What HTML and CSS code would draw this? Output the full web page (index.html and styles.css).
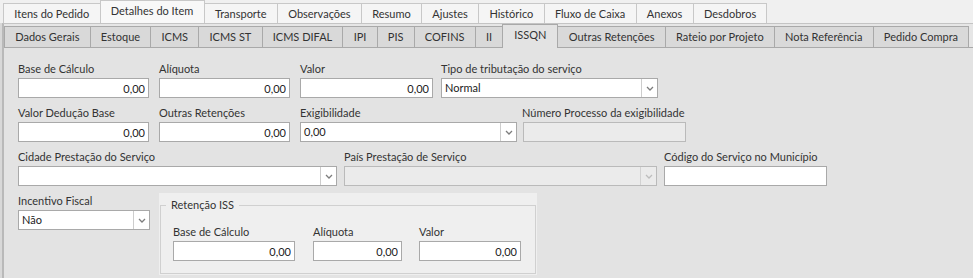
FILE: index.html
```html
<!DOCTYPE html>
<html lang="pt-BR">

<head>
    <meta charset="UTF-8">
    <meta name="viewport" content="width=device-width, initial-scale=1.0">
    <title>Detalhes do Item - ISSQN</title>
    <link rel="stylesheet" href="styles.css">
</head>

<body>
    <div class="window">
        <div class="tabs">
            <div class="tab">Itens do Pedido</div>
            <div class="tab active">Detalhes do Item</div>
            <div class="tab">Transporte</div>
            <div class="tab">Observações</div>
            <div class="tab">Resumo</div>
            <div class="tab">Ajustes</div>
            <div class="tab">Histórico</div>
            <div class="tab">Fluxo de Caixa</div>
            <div class="tab">Anexos</div>
            <div class="tab">Desdobros</div>
        </div>

        <div class="page">
            <div class="subtabs">
                <div class="subtab">Dados Gerais</div>
                <div class="subtab">Estoque</div>
                <div class="subtab">ICMS</div>
                <div class="subtab">ICMS ST</div>
                <div class="subtab">ICMS DIFAL</div>
                <div class="subtab">IPI</div>
                <div class="subtab">PIS</div>
                <div class="subtab">COFINS</div>
                <div class="subtab">II</div>
                <div class="subtab active">ISSQN</div>
                <div class="subtab">Outras Retenções</div>
                <div class="subtab">Rateio por Projeto</div>
                <div class="subtab">Nota Referência</div>
                <div class="subtab">Pedido Compra</div>
            </div>

            <div class="panel">
                <div class="row">
                    <div class="field w-131 mr-10">
                        <label>Base de Cálculo</label>
                        <input class="edit num" value="0,00">
                    </div>
                    <div class="field w-131 mr-10">
                        <label>Alíquota</label>
                        <input class="edit num" value="0,00">
                    </div>
                    <div class="field w-133 mr-8">
                        <label>Valor</label>
                        <input class="edit num" value="0,00">
                    </div>
                    <div class="field w-217">
                        <label>Tipo de tributação do serviço</label>
                        <div class="combo">
                            <span class="combo-text">Normal</span>
                            <span class="combo-btn"><svg width="8" height="5" viewBox="0 0 8 5"><path d="M1 1 L4 4 L7 1" /></svg></span>
                        </div>
                    </div>
                </div>

                <div class="row">
                    <div class="field w-131 mr-10">
                        <label>Valor Dedução Base</label>
                        <input class="edit num" value="0,00">
                    </div>
                    <div class="field w-131 mr-10">
                        <label>Outras Retenções</label>
                        <input class="edit num" value="0,00">
                    </div>
                    <div class="field w-217 mr-6">
                        <label>Exigibilidade</label>
                        <div class="combo">
                            <span class="combo-text">0,00</span>
                            <span class="combo-btn"><svg width="8" height="5" viewBox="0 0 8 5"><path d="M1 1 L4 4 L7 1" /></svg></span>
                        </div>
                    </div>
                    <div class="field w-163">
                        <label class="shift">Número Processo da exigibilidade</label>
                        <input class="edit disabled" value="" disabled>
                    </div>
                </div>

                <div class="row">
                    <div class="field w-319 mr-7">
                        <label>Cidade Prestação do Serviço</label>
                        <div class="combo">
                            <span class="combo-text"></span>
                            <span class="combo-btn"><svg width="8" height="5" viewBox="0 0 8 5"><path d="M1 1 L4 4 L7 1" /></svg></span>
                        </div>
                    </div>
                    <div class="field w-313 mr-7">
                        <label>País Prestação de Serviço</label>
                        <div class="combo disabled">
                            <span class="combo-text"></span>
                            <span class="combo-btn"><svg width="8" height="5" viewBox="0 0 8 5"><path d="M1 1 L4 4 L7 1" /></svg></span>
                        </div>
                    </div>
                    <div class="field w-163">
                        <label>Código do Serviço no Município</label>
                        <input class="edit" value="">
                    </div>
                </div>

                <div class="row">
                    <div class="field w-132 mr-9">
                        <label>Incentivo Fiscal</label>
                        <div class="combo">
                            <span class="combo-text">Não</span>
                            <span class="combo-btn"><svg width="8" height="5" viewBox="0 0 8 5"><path d="M1 1 L4 4 L7 1" /></svg></span>
                        </div>
                    </div>

                    <div class="group">
                        <fieldset>
                            <legend>Retenção ISS</legend>
                            <div class="group-row">
                                <div class="field w-122 mr-18">
                                    <label>Base de Cálculo</label>
                                    <input class="edit num" value="0,00">
                                </div>
                                <div class="field w-89 mr-17">
                                    <label>Alíquota</label>
                                    <input class="edit num" value="0,00">
                                </div>
                                <div class="field w-102">
                                    <label>Valor</label>
                                    <input class="edit num" value="0,00">
                                </div>
                            </div>
                        </fieldset>
                    </div>
                </div>
            </div>
        </div>
    </div>
</body>

</html>
```
FILE: styles.css
```css
* {
    margin: 0;
    padding: 0;
    box-sizing: border-box;
}

:root {
    --text: #333;
    --panel: #e3e3e3;
    --edit-border: #a9a9a9;
}

body {
    font-family: Lato, "Liberation Sans", sans-serif;
    font-size: 11px;
    color: var(--text);
    background-color: #f0f0f0;
    overflow: hidden;
}

.window {
    height: 278px;
    display: flex;
    flex-direction: column;
}

/* top tabs */

.tabs {
    display: flex;
    align-items: flex-end;
    height: 23px;
    padding-left: 3px;
}

.tab {
    height: 20px;
    padding: 0 10.3px;
    line-height: 19px;
    background-color: #f5f5f5;
    border: 1px solid #c8c8c8;
    border-bottom: none;
    margin-right: -1px;
    white-space: nowrap;
}

.tab.active {
    height: 23px;
    padding-bottom: 3px;
    background-color: #f8f8f8;
    position: relative;
    z-index: 1;
}

/* page with sub tabs */

.page {
    flex: 1;
    margin-left: 2px;
    background-color: var(--panel);
    border-top: 1px solid #c4c4c4;
    border-left: 2px solid #b9b9b9;
    box-shadow: -2px 0 0 #d8d8d8;
    display: flex;
    flex-direction: column;
}

.subtabs {
    display: flex;
    align-items: flex-end;
    height: 23px;
    background-color: #e6e6e6;
}

.subtab {
    height: 21px;
    padding: 0 10.2px;
    line-height: 19px;
    background-color: #d9d9d9;
    border: 1px solid #a9a9a9;
    border-bottom: none;
    margin-right: -1px;
    white-space: nowrap;
}

.subtab.active {
    height: 24px;
    margin-bottom: -1px;
    padding: 0 11px 4px;
    background-color: var(--panel);
    position: relative;
    z-index: 1;
}

.panel {
    flex: 1;
    border-top: 1px solid #a9a9a9;
    padding: 14px 0 0 14px;
}

/* form */

.row {
    display: flex;
    align-items: flex-start;
    margin-bottom: 8px;
}

.field label {
    display: block;
    height: 14px;
    line-height: 14px;
    margin-bottom: 2px;
    white-space: nowrap;
}

.field label.shift {
    margin-left: -1px;
}

.edit {
    display: block;
    width: 100%;
    height: 20px;
    padding: 0 3px;
    font-family: Lato, "Liberation Sans", sans-serif;
    font-size: 11px;
    color: #222;
    background-color: #fff;
    border: 1px solid var(--edit-border);
    border-radius: 0;
    outline: none;
}

.edit.num {
    text-align: right;
}

.edit.disabled {
    background-color: #ebebeb;
    border-color: #bababa;
}

.combo {
    display: flex;
    height: 20px;
    background-color: #fff;
    border: 1px solid var(--edit-border);
    color: #222;
}

.combo-text {
    flex: 1;
    padding-left: 3px;
    line-height: 18px;
    white-space: nowrap;
}

.combo-btn {
    width: 16px;
    border-left: 1px solid #cdcdcd;
    display: flex;
    align-items: center;
    justify-content: center;
}

.combo-btn path {
    fill: none;
    stroke: #7d7d7d;
    stroke-width: 1.3;
}

.combo.disabled {
    background-color: #ebebeb;
    border-color: #bababa;
}

.combo.disabled .combo-btn {
    border-left-color: #d2d2d2;
}

.combo.disabled .combo-btn path {
    stroke: #bdbdbd;
}

/* retenção group */

.group {
    width: 378px;
    margin-top: -1px;
    padding: 5px 1px 1px 1px;
    background-color: #efefef;
}

.group fieldset {
    border: 1px solid #d0d0d0;
    padding: 0 0 12px 5px;
    min-width: 0;
}

.group legend {
    padding: 0 5px;
    line-height: 14px;
}

.group-row {
    display: flex;
    margin-top: 13px;
    padding-left: 7px;
}

/* widths */

.w-89 { width: 89px; }
.w-102 { width: 102px; }
.w-122 { width: 122px; }
.w-131 { width: 131px; }
.w-132 { width: 132px; }
.w-133 { width: 133px; }
.w-163 { width: 163px; }
.w-217 { width: 217px; }
.w-313 { width: 313px; }
.w-319 { width: 319px; }

.mr-6 { margin-right: 6px; }
.mr-7 { margin-right: 7px; }
.mr-8 { margin-right: 8px; }
.mr-9 { margin-right: 9px; }
.mr-10 { margin-right: 10px; }
.mr-17 { margin-right: 17px; }
.mr-18 { margin-right: 18px; }
```
